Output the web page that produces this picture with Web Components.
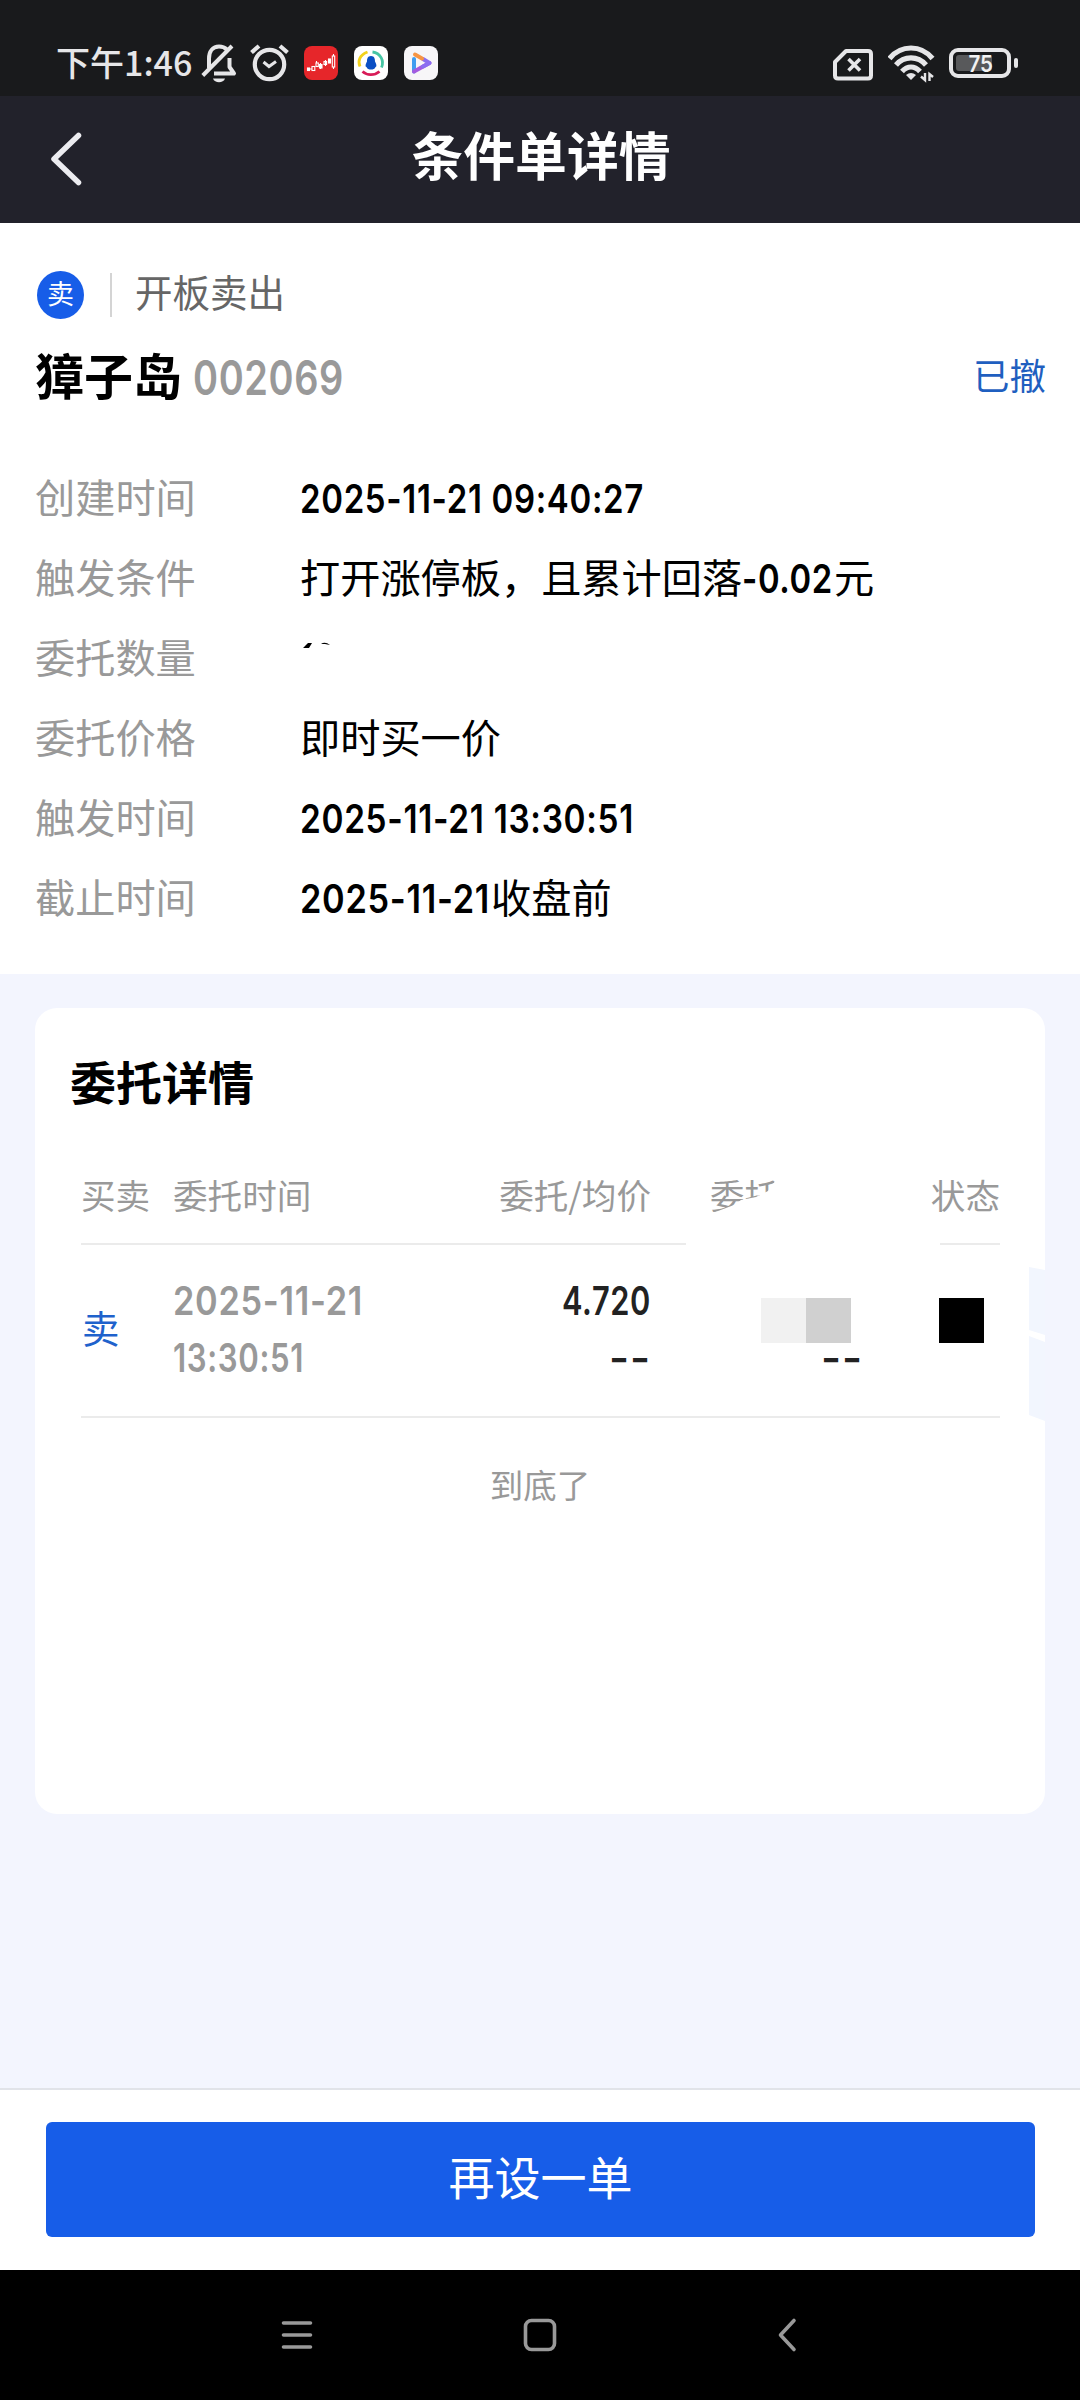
<!DOCTYPE html>
<html lang="zh-CN">
<head>
<meta charset="UTF-8">
<title>条件单详情</title>
<style>
  body { margin: 0; font-family: "Noto Sans CJK SC", "Noto Sans", sans-serif; }
</style>
</head>
<body>
<order-page></order-page>

<script>
// Condensed figures: the text is squeezed to the given width
class NumText extends HTMLElement {
  constructor() {
    super();
    this.attachShadow({ mode: 'open' });
  }

  connectedCallback() {
    const size = Number(this.getAttribute('size') || 39.5);
    const width = Number(this.getAttribute('width'));
    const weight = this.getAttribute('weight') || 600;
    const height = Math.round(size * 0.727);
    this.shadowRoot.innerHTML = `
      <style>
        :host { display: inline-block; width: ${width}px; height: ${height}px; line-height: ${height}px; }
        span { display: inline-block; font: ${weight} ${size}px/${height}px Inter, Roboto, sans-serif; letter-spacing: 0.800px; white-space: nowrap; transform-origin: 0 50%; }
      </style>
      <span>${this.getAttribute('value')}</span>
    `;
    const span = this.shadowRoot.querySelector('span');
    span.style.transform = `scaleX(${width / span.getBoundingClientRect().width})`;
  }
}
customElements.define('num-text', NumText);

class StatusBar extends HTMLElement {
  constructor() {
    super();
    this.attachShadow({ mode: 'open' });
    this.shadowRoot.innerHTML = `
      <style>
        :host { display: flex; align-items: flex-start; box-sizing: border-box; height: 96px; padding: 44px 62px 0 56px; background: #191a1c; color: #e6e6e8; }
        .time { display: flex; align-items: baseline; width: 145px; height: 40px; margin-top: -2px; line-height: 40px; font-size: 34px; font-weight: 500; white-space: nowrap; }
        .icons, .right { display: flex; align-items: flex-start; }
        svg { display: block; flex: none; }
        .right { margin-left: auto; }
      </style>
      <div class="time">下午1:46</div>
      <div class="icons">
        <svg width="36" height="40" viewBox="0 0 36 40" fill="none" stroke="#e6e6e8" stroke-width="4">
          <path d="M8 24V14.500C8 7 12 2.500 18 2.500C21.500 2.500 24 3.600 25.800 5.500M28.500 14V23L33 29.500H13" stroke-linejoin="round"/>
          <path d="M1.800 31.500L31 2"/>
          <path d="M12 34.500H24C22.500 39.500 13.500 39.500 12 34.500Z" fill="#e6e6e8" stroke="none"/>
        </svg>
        <svg width="40" height="40" viewBox="0 0 40 40" fill="none" stroke="#e6e6e8" stroke-width="4.200" style="margin-left:13px">
          <circle cx="19.500" cy="20.500" r="14.700"/>
          <path d="M1.500 8.500L9 2M30 2L37.500 8.500"/>
          <path d="M13.500 18L19 22.500L26 17.500" stroke-width="3"/>
        </svg>
        <svg width="34" height="34" viewBox="0 0 34 34" style="margin:2px 0 0 14px">
          <rect width="34" height="34" rx="8" fill="#e6262a"/>
          <g fill="none" stroke="#fff" stroke-width="1.100">
            <rect x="3.500" y="22" width="2" height="2.500" fill="#fff"/><rect x="8" y="20.500" width="2.800" height="4"/>
            <path d="M5.500 23H8M12.500 15V17M16.500 17V23M21.500 14V20"/>
            <rect x="12" y="17" width="2.300" height="3.500"/><rect x="15.500" y="18.500" width="2.500" height="3.500" fill="#fff"/>
            <rect x="20" y="15.500" width="2.600" height="3"/><rect x="24.500" y="13" width="2" height="4" fill="#fff"/>
            <path d="M29.500 8V23"/><rect x="28.300" y="10" width="2.400" height="11" fill="#e6262a"/>
          </g>
        </svg>
        <svg width="34" height="34" viewBox="0 0 34 34" style="margin:2px 0 0 16px">
          <rect width="34" height="34" rx="8" fill="#fff"/>
          <g fill="none" stroke-width="2.800">
            <path d="M13.500 6C5.500 9 3.500 15 6 20.500" stroke="#f2d21c"/>
            <path d="M18.500 6C26.500 7 30.500 15 27.500 21.500" stroke="#47c5a4"/>
            <path d="M8.500 25.500C13 29.500 20 30 25.500 25.500" stroke="#d81c58"/>
          </g>
          <path d="M17 10C13.500 10 13 13 13 15.500C11.500 18 11 21 12.500 21C13 23 15 23.500 17 23.500C19 23.500 21 23 21.500 21C23 21 22.500 18 21 15.500C21 13 20.500 10 17 10Z" fill="#0a4fc4"/>
        </svg>
        <svg width="34" height="34" viewBox="0 0 34 34" style="margin:2px 0 0 16px">
          <rect width="34" height="34" rx="8" fill="#f7f6f8"/>
          <g fill="none" stroke-width="4" stroke-linecap="round" stroke-linejoin="round">
            <path d="M10 13V25.500" stroke="#3f9df0"/>
            <path d="M10 25.500L25.500 17" stroke="#a45be0"/>
            <path d="M19 13L25.500 17L19 20.500" stroke="#8b6df0"/>
            <path d="M11 8.500L18 12.500" stroke="#f79543"/>
          </g>
        </svg>
      </div>
      <div class="right">
        <svg width="40" height="32" viewBox="0 0 40 32" fill="none" stroke="#e6e6e8" stroke-width="4" style="margin-top:5px">
          <path d="M13 2H35Q38 2 38 5V26.500Q38 29.500 35 29.500H5Q2 29.500 2 26.500V13Z" stroke-linejoin="round"/>
          <path d="M15.500 10L27 21.500M27 10L15.500 21.500" stroke-width="3.600"/>
        </svg>
        <svg width="47" height="38" viewBox="0 0 47 38" fill="none" stroke="#e6e6e8" stroke-width="5.200" style="margin:1px 0 0 15px">
          <path d="M1.500 13.500C13 -0.500 33 -0.500 44.500 13.500"/>
          <path d="M8 20C16 10.500 30 10.500 38 20"/>
          <path d="M14 26.500C19.500 20.500 26.500 20.500 32 26.500"/>
          <path d="M18 30Q23 26 28 30L23 35Z" fill="#e6e6e8" stroke="none"/>
          <path d="M37 28V35L33 31.500M41.500 36V29L45 32" stroke-width="2.400"/>
        </svg>
        <svg width="69" height="32" viewBox="0 0 69 32" style="margin:4px 0 0 14px">
          <rect x="2" y="2" width="58" height="26" rx="7" fill="none" stroke="#e6e6e8" stroke-width="4"/>
          <rect x="7" y="7" width="36" height="16" rx="3" fill="#58595b"/>
          <rect x="65" y="10" width="4" height="10" rx="2" fill="#e6e6e8"/>
          <text x="19.500" y="24" font-family="Inter, sans-serif" font-size="23.500" font-weight="600" textLength="24.500" lengthAdjust="spacingAndGlyphs" fill="#f2f2f2">75</text>
        </svg>
      </div>
    `;
  }
}
customElements.define('status-bar', StatusBar);

class TitleBar extends HTMLElement {
  constructor() {
    super();
    this.attachShadow({ mode: 'open' });
    this.shadowRoot.innerHTML = `
      <style>
        :host { display: grid; grid-template-columns: 120px 1fr 120px; align-items: start; height: 127px; background: #22222b; color: #fff; }
        svg { display: block; margin: 34px 0 0 48px; }
        h1 { margin: 18px 0 0 2px; font-size: 51.800px; line-height: 80px; font-weight: 700; text-align: center; }
      </style>
      <svg width="36" height="56" viewBox="0 0 36 56" fill="none" stroke="#ececf0" stroke-width="5.500" stroke-linecap="round" stroke-linejoin="round"><path d="M30.500 5.500L6 29L30.500 52.500"/></svg>
      <h1><slot></slot></h1>
    `;
  }
}
customElements.define('title-bar', TitleBar);

class OrderSummary extends HTMLElement {
  constructor() {
    super();
    this.attachShadow({ mode: 'open' });
    this.shadowRoot.innerHTML = `
      <style>
        :host { display: block; box-sizing: border-box; height: 751px; padding: 42px 34px 0 35px; background: #fff; }
        .kind { display: flex; align-items: center; height: 60px; font-size: 37.500px; line-height: 56px; color: #666; }
        .badge { width: 47px; height: 48px; border-radius: 50%; background: #175de8; color: #fff; font-size: 27px; line-height: 43px; text-align: center; margin-left: 2px; }
        .rule { width: 2px; height: 44px; margin: 0 23px 0 26px; background: #d4d4d4; }
        .kind span { margin-top: -9px; }
        .stock { display: flex; align-items: baseline; height: 80px; margin-top: 9px; line-height: 80px; }
        .name { font-size: 49px; font-weight: 700; margin-right: 11px; }
        .code { color: #999; }
        .state { align-self: flex-start; margin-left: auto; font-size: 36.500px; line-height: 81px; color: #1f5fc0; }
        .rows { margin-top: 42px; }
      </style>
      <div class="kind"><div class="badge">卖</div><div class="rule"></div><span>开板卖出</span></div>
      <div class="stock">
        <span class="name">獐子岛</span>
        <num-text class="code" value="002069" size="48" width="151"></num-text>
        <span class="state">已撤</span>
      </div>
      <div class="rows"><slot></slot></div>
    `;
  }
}
customElements.define('order-summary', OrderSummary);

class InfoRow extends HTMLElement {
  constructor() {
    super();
    this.attachShadow({ mode: 'open' });
    this.shadowRoot.innerHTML = `
      <style>
        :host { display: grid; grid-template-columns: 265px 1fr; height: 80px; line-height: 80px; font-size: 40.200px; color: #000; white-space: nowrap; }
        .label { color: #999; }
      </style>
      <div class="label">${this.getAttribute('label')}</div>
      <div><slot></slot></div>
    `;
  }
}
customElements.define('info-row', InfoRow);

class EntrustCard extends HTMLElement {
  constructor() {
    super();
    this.attachShadow({ mode: 'open' });
    this.shadowRoot.innerHTML = `
      <style>
        :host { display: block; position: relative; box-sizing: border-box; height: 806px; margin: 34px 35px 0; padding: 32px 45px 0 46px; border-radius: 22px; background: #fff; }
        h2 { margin: 0 0 0 -11px; font-size: 46px; line-height: 80px; font-weight: 700; color: #000; }
        .head, .row { display: grid; grid-template-columns: 92px 300px 178px 210px 139px; }
        .head { height: 80px; margin-top: 43px; line-height: 60px; padding-top: 1px; box-sizing: border-box; font-size: 34.600px; color: #999; }
        .head .right { text-align: right; }
        /* the column title is wiped off below a slanted edge */
        .cut { margin-left: 59px; width: 75px; height: 60px; clip-path: polygon(0 0, 100% 0, 66px 16px, 58px 27px, 46px 33px, 31px 36px, 24px 41px, 0 50px); }
        .lines { display: flex; justify-content: space-between; }
        .lines i { height: 2px; background: #ebebeb; }
        .row { height: 171px; border-bottom: 2px solid #ebebeb; color: #222; }
        .side { padding-top: 54px; padding-left: 1px; font-size: 37.500px; line-height: 56px; color: #1f62cc; }
        .pair { display: flex; flex-direction: column; gap: 28px; padding-top: 42px; color: #999; }
        .price { align-items: flex-end; color: #222; }
        .vol { display: flex; flex-direction: column; padding: 53px 0 0 110px; }
        .tiles { display: flex; }
        .tiles b, .block { width: 45px; height: 45px; background: #f1f1f1; }
        .tiles b + b { background: #d0d0d0; }
        .vol num-text { margin: 1px 0 0 60px; }
        .block { margin: 53px 0 0 78px; background: #000; }
        .end { margin-top: 36px; padding-right: 1px; text-align: center; font-size: 33.500px; line-height: 60px; color: #999; }
        .notch { position: absolute; right: 0; top: 258px; }
      </style>
      <h2>委托详情</h2>
      <div class="head">
        <span>买卖</span><span>委托时间</span><span class="right">委托/均价</span><span class="cut">委托</span><span class="right">状态</span>
      </div>
      <div class="lines"><i style="width:605px"></i><i style="width:60px"></i></div>
      <div class="row">
        <div class="side">卖</div>
        <div class="pair">
          <num-text value="2025-11-21" width="190"></num-text>
          <num-text value="13:30:51" width="131"></num-text>
        </div>
        <div class="pair price">
          <num-text value="4.720" width="89"></num-text>
          <num-text value="--" width="42"></num-text>
        </div>
        <div class="vol"><div class="tiles"><b></b><b></b></div><num-text value="--" width="42"></num-text></div>
        <div class="block"></div>
      </div>
      <div class="end">到底了</div>
      <svg class="notch" width="17" height="156" viewBox="0 0 17 156" fill="#f2f6fe"><path d="M1 1L17 4V69L1 64ZM1 70L17 76V155L1 149Z"/></svg>
    `;
  }
}
customElements.define('entrust-card', EntrustCard);

class ActionBar extends HTMLElement {
  constructor() {
    super();
    this.attachShadow({ mode: 'open' });
    this.shadowRoot.innerHTML = `
      <style>
        :host { display: block; box-sizing: border-box; height: 182px; margin-top: auto; padding: 32px 45px 0 46px; border-top: 2px solid #e1e3e9; background: #fff; }
        button { display: block; width: 100%; height: 115px; border: 0; border-radius: 6px; padding: 0 0 10px; background: #175de8; color: #fff; font: inherit; font-size: 46px; line-height: 60px; }
      </style>
      <button><slot></slot></button>
    `;
  }
}
customElements.define('action-bar', ActionBar);

class NavBar extends HTMLElement {
  constructor() {
    super();
    this.attachShadow({ mode: 'open' });
    this.shadowRoot.innerHTML = `
      <style>
        :host { display: grid; grid-template-columns: 241px 256px 20px; align-items: center; box-sizing: border-box; height: 130px; padding-left: 280px; background: #000; }
        svg { display: block; fill: none; stroke: #999; stroke-width: 3.600px; stroke-linecap: round; stroke-linejoin: round; }
      </style>
      <svg width="34" height="36"><path d="M3.500 6H30.500M3.500 18H30.500M3.500 30H30.500"/></svg>
      <svg width="36" height="36"><rect x="4.500" y="3.500" width="29" height="29" rx="6"/></svg>
      <svg width="20" height="36"><path d="M17 3.500L3.500 18L17 32.500"/></svg>
    `;
  }
}
customElements.define('nav-bar', NavBar);

class OrderPage extends HTMLElement {
  constructor() {
    super();
    this.attachShadow({ mode: 'open' });
    this.shadowRoot.innerHTML = `
      <style>
        :host { display: flex; flex-direction: column; width: 1080px; height: 2400px; background: #f3f5fe; }
        .erased { display: block; margin-top: 26px; }
        .tail { margin-right: 1px; }
      </style>
      <status-bar></status-bar>
      <title-bar>条件单详情</title-bar>
      <order-summary>
        <info-row label="创建时间"><num-text value="2025-11-21 09:40:27" width="344"></num-text></info-row>
        <info-row label="触发条件">打开涨停板，且累计回落<num-text class="tail" value="-0.02" width="91"></num-text>元</info-row>
        <info-row label="委托数量"><svg class="erased" width="40" height="7"><path d="M3 6L8 1H12L9 6ZM21 2Q25 -1 30 3L25 2Z"/></svg></info-row>
        <info-row label="委托价格">即时买一价</info-row>
        <info-row label="触发时间"><num-text value="2025-11-21 13:30:51" width="334"></num-text></info-row>
        <info-row label="截止时间"><num-text class="tail" value="2025-11-21" width="190"></num-text>收盘前</info-row>
      </order-summary>
      <entrust-card></entrust-card>
      <action-bar>再设一单</action-bar>
      <nav-bar></nav-bar>
    `;
  }
}
customElements.define('order-page', OrderPage);
</script>
</body>
</html>
